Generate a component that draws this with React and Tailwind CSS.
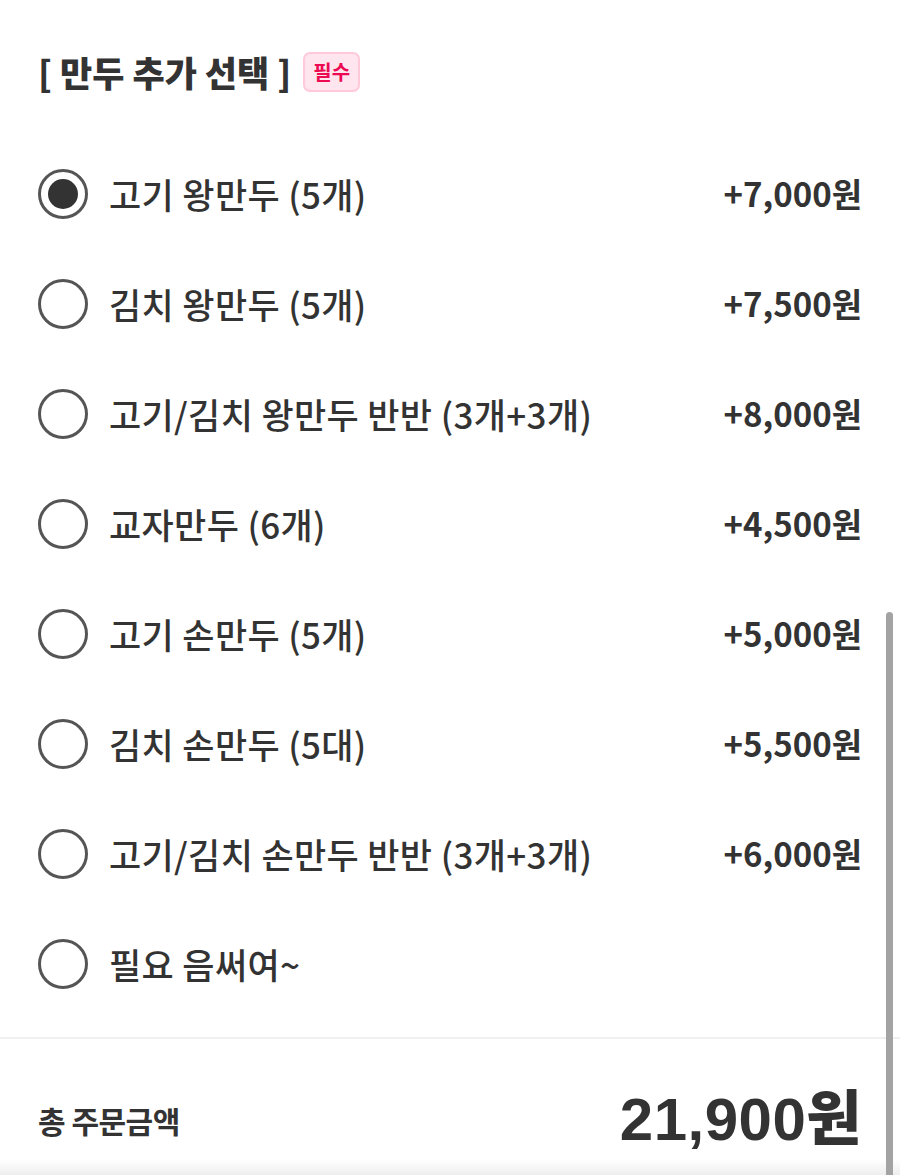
import React from "react";

const options = [
  { label: "고기 왕만두 (5개)", price: "+7,000원", checked: true },
  { label: "김치 왕만두 (5개)", price: "+7,500원" },
  { label: "고기/김치 왕만두 반반 (3개+3개)", price: "+8,000원" },
  { label: "교자만두 (6개)", price: "+4,500원" },
  { label: "고기 손만두 (5개)", price: "+5,000원" },
  { label: "김치 손만두 (5대)", price: "+5,500원" },
  { label: "고기/김치 손만두 반반 (3개+3개)", price: "+6,000원" },
  { label: "필요 음써여~", price: "" },
];

const Radio = ({ checked }) => (
  <span className="flex h-[50px] w-[50px] shrink-0 items-center justify-center rounded-full border-[3px] border-[#555]">
    {checked && <span className="h-[30px] w-[30px] rounded-full bg-[#333]" />}
  </span>
);

const App = () => (
  <div className="relative h-[1175px] w-[900px] overflow-hidden bg-white text-[#333] font-['Noto_Sans_CJK_KR','Noto_Sans',sans-serif]">
    <div className="flex items-center gap-3 px-[38px] pt-[48px]">
      <h2 className="text-[35px] font-extrabold leading-[48px]">[ 만두 추가 선택 ]</h2>
      <span className="rounded-[7px] border-2 border-[#ffc9d9] bg-[#ffe6ee] px-[8px] py-[4px] text-[20px] font-bold leading-[28px] text-[#ec0a52]">
        필수
      </span>
    </div>

    <ul className="mt-[43px] flex flex-col px-[38px]">
      {options.map((o) => (
        <li key={o.label} className="flex h-[110px] items-center gap-[21px]">
          <Radio checked={o.checked} />
          <span className="flex-1 text-[35px] font-medium tracking-[0.35px]">{o.label}</span>
          <span className="text-[33px] font-semibold">{o.price}</span>
        </li>
      ))}
    </ul>

    <div className="mt-[18px] border-t-2 border-[#f0f0f0]" />

    <div className="flex h-[120px] items-center justify-between px-[38px] pt-[42px]">
      <span className="text-[30px] font-bold tracking-[-0.5px]">총 주문금액</span>
      <span className="text-[60px] font-black leading-none tracking-[0.5px] font-['Liberation_Sans','Noto_Sans_CJK_KR',sans-serif]">
        21,900원
      </span>
    </div>

    <div className="absolute bottom-0 left-0 right-0 h-[16px] bg-gradient-to-b from-white to-[#eeeeee]" />
    <div className="absolute bottom-0 right-[7px] top-[612px] w-[7px] rounded-t-full bg-[#a3a3a3]" />
  </div>
);

export default App;
